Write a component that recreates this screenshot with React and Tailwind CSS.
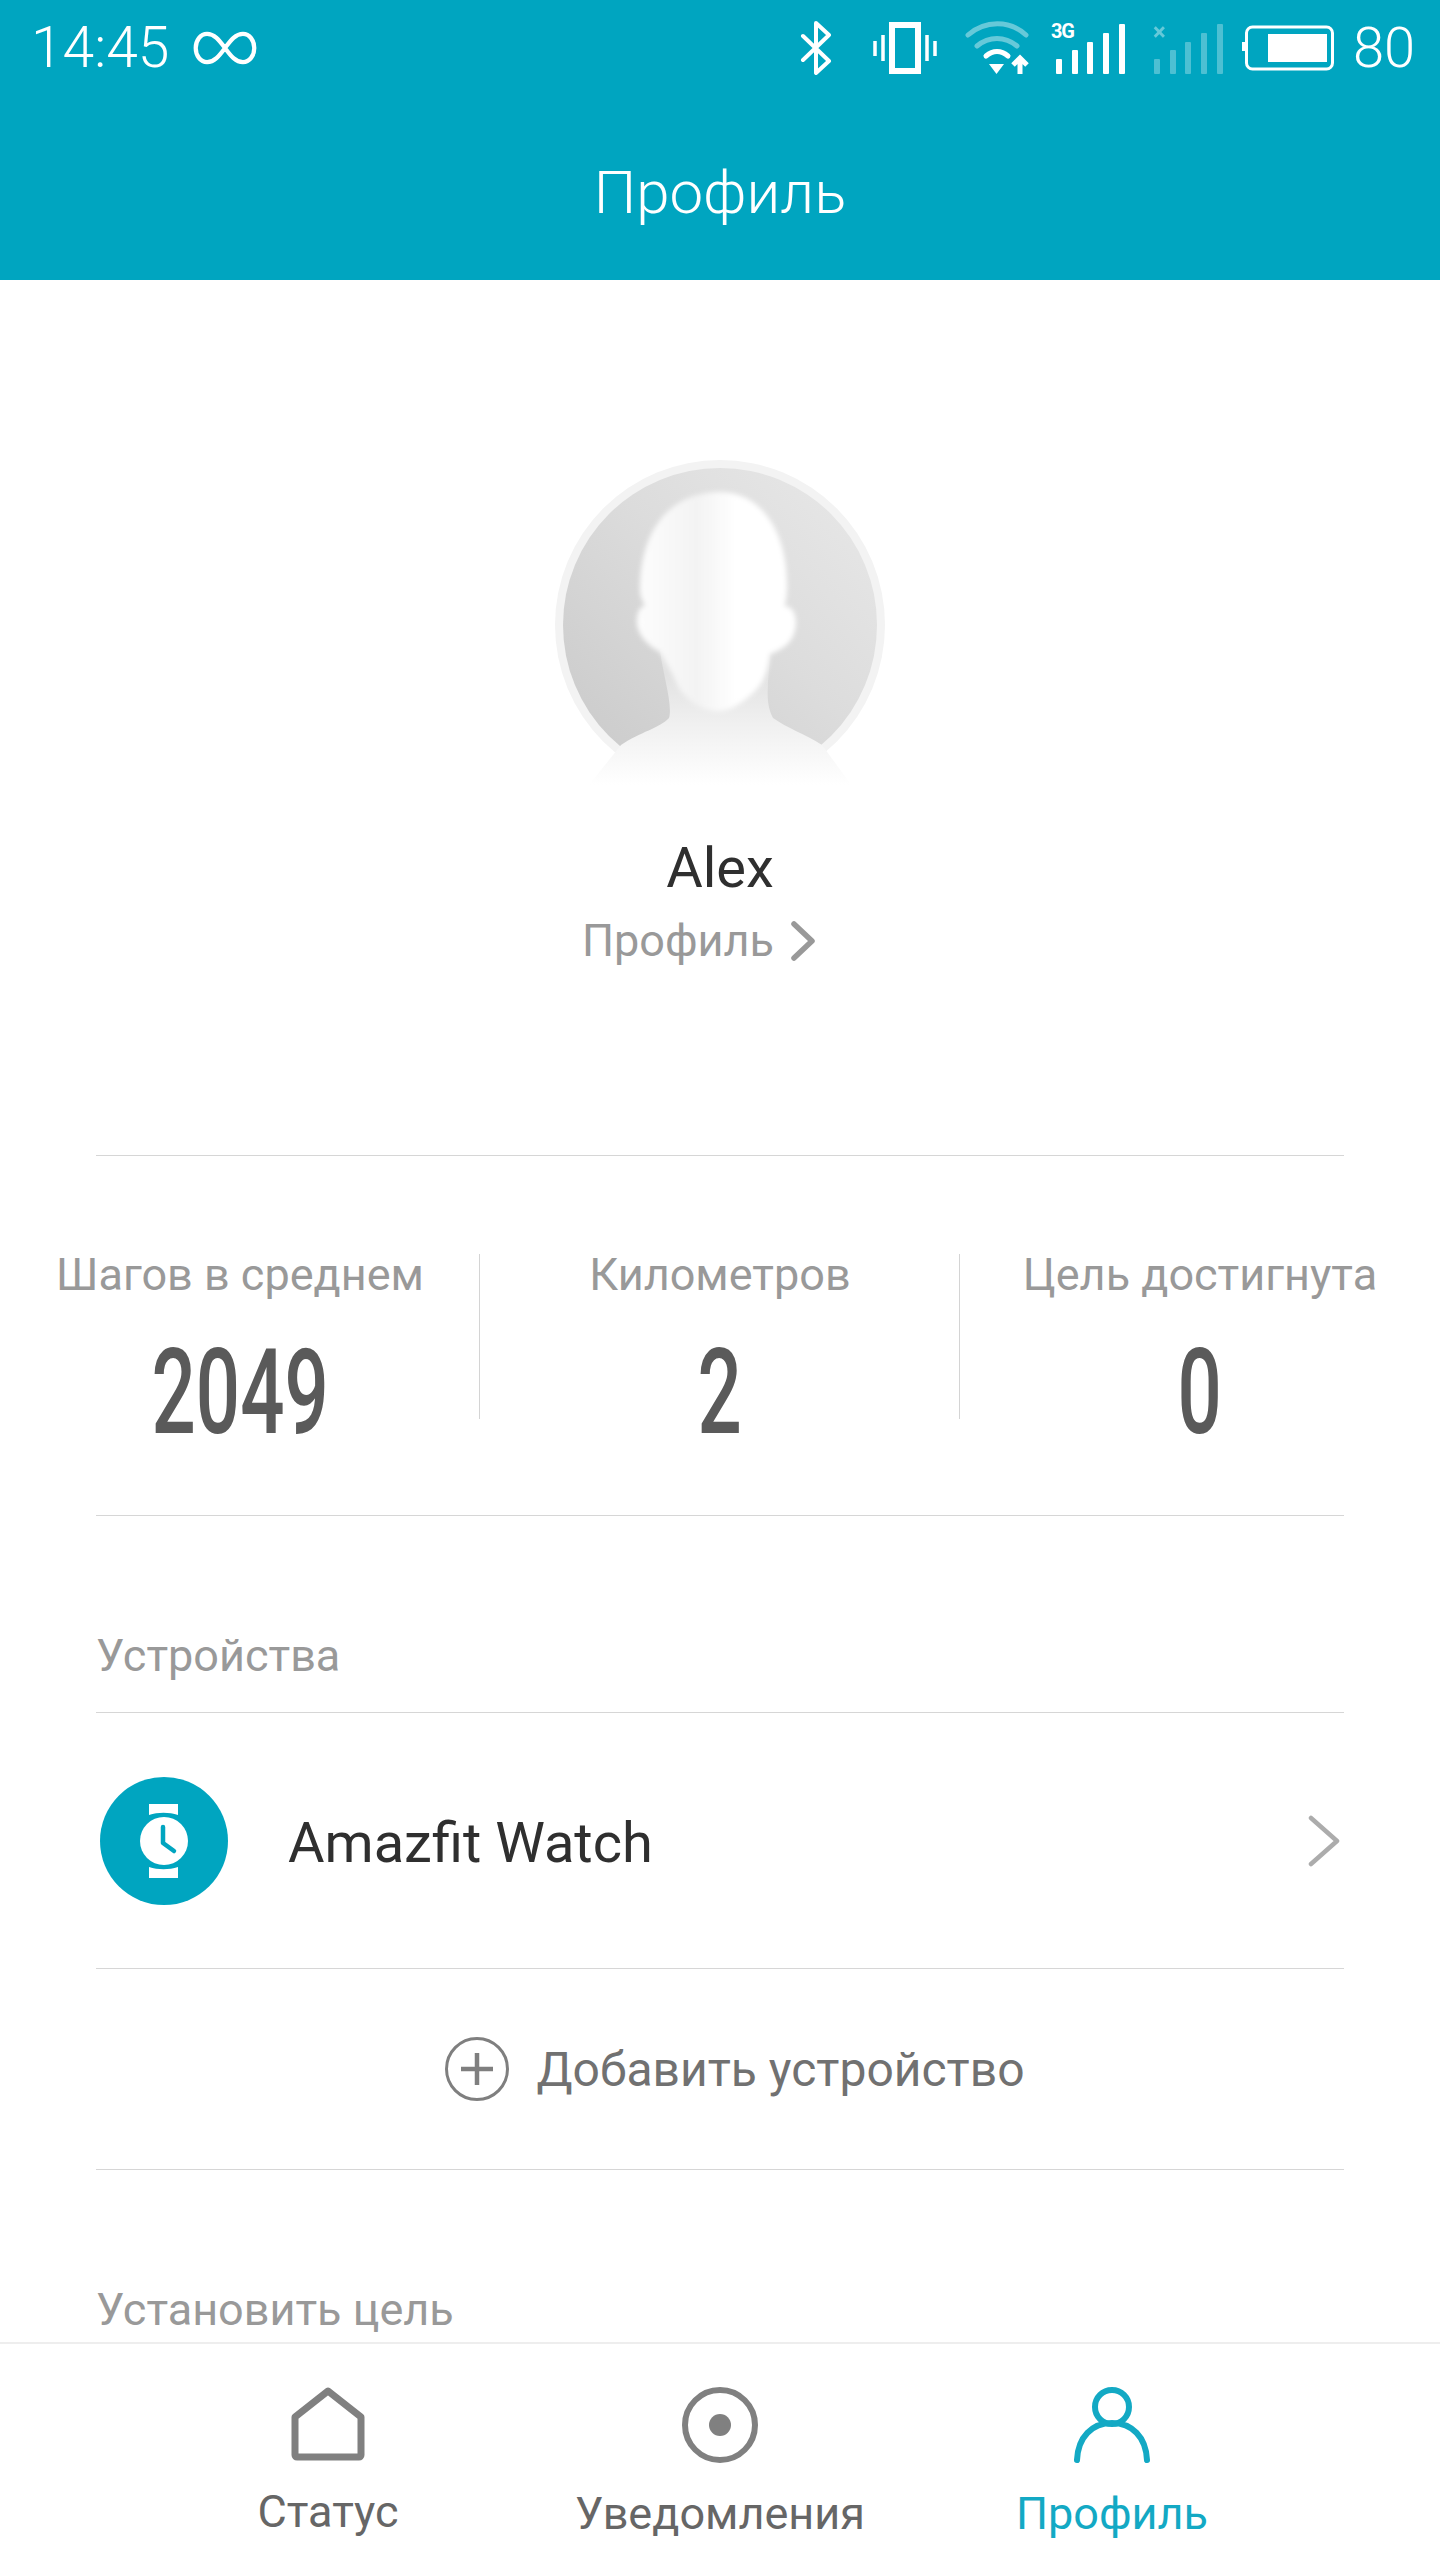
import React from "react";

const Bars = ({ opacity = 1 }) => (
  <svg width="72" height="52" viewBox="0 0 72 52" fill="white" opacity={opacity}>
    <rect x="2" y="36" width="6" height="15" rx="1" />
    <rect x="18" y="27" width="6" height="24" rx="1" />
    <rect x="33" y="19" width="6" height="32" rx="1" />
    <rect x="49" y="10" width="6" height="41" rx="1" />
    <rect x="65" y="1" width="6" height="50" rx="1" />
  </svg>
);

const StatusBar = () => (
  <div className="flex items-center h-[96px] pl-[31px] pr-[25px] text-white">
    <span className="text-[57px] leading-[96px] font-light">14:45</span>
    <svg className="ml-[23px]" width="66" height="34" viewBox="0 0 68 36" fill="none" stroke="white" strokeWidth="4.500">
      <path d="M34 18c-6-8-11-15-19-15C8 3 3 10 3 18s5 15 12 15c8 0 13-7 19-15s11-15 19-15c7 0 12 7 12 15s-5 15-12 15c-8 0-13-7-19-15z" />
    </svg>
    <svg className="ml-auto" width="32" height="54" viewBox="0 0 32 54" fill="none" stroke="white" strokeWidth="4" strokeLinecap="round" strokeLinejoin="round">
      <path d="M3 15l26 25-13 12V2l13 12L3 39" />
    </svg>
    <svg className="ml-[41px]" width="64" height="52" viewBox="0 0 64 52" fill="none" stroke="white">
      <rect x="19" y="3" width="26" height="46" strokeWidth="6" />
      <path d="M2 19v15M10 13v26M54 13v26M62 19v15" strokeWidth="3.500" />
    </svg>
    <svg className="ml-[28px]" width="66" height="54" viewBox="0 0 66 54" fill="none" stroke="white" strokeWidth="5" strokeLinecap="round">
      <path d="M3 14C20-1 45-1 61 14" opacity="0.4" />
      <path d="M12 25c12-10 28-10 40 0" opacity="0.4" />
      <path d="M21 35c7-6 15-6 22 0" />
      <path d="M24 43h15l-7.500 10z" fill="white" stroke="none" />
      <path d="M55 53V38M48 44l7-7 7 7" strokeLinecap="butt" />
    </svg>
    <div className="relative ml-[23px] w-[72px] h-[52px] mt-[2px]">
      <span className="absolute left-[-3px] top-[-2px] text-[20px] leading-[20px] font-bold tracking-[-1px]">3G</span>
      <Bars />
    </div>
    <div className="relative ml-[26px] w-[72px] h-[52px] mt-[2px]">
      <span className="absolute left-[1px] top-[-1px] text-[24px] leading-[20px] font-bold opacity-40">×</span>
      <Bars opacity={0.3} />
    </div>
    <svg className="ml-[18px]" width="92" height="46" viewBox="0 0 92 46" fill="white">
      <rect x="4.500" y="2" width="86" height="42" rx="6" fill="none" stroke="white" strokeWidth="3" />
      <rect x="0" y="17" width="3" height="9" />
      <rect x="26" y="9" width="59" height="28" />
    </svg>
    <span className="ml-[19px] text-[56px] leading-[96px] font-light">80</span>
  </div>
);

const Avatar = () => (
  <svg width="330" height="330" viewBox="0 0 330 330">
    <defs>
      <linearGradient id="bg" x1="0" y1="1" x2="1" y2="0">
        <stop offset="0" stopColor="#c8c8c8" />
        <stop offset="0.55" stopColor="#dcdcdc" />
        <stop offset="1" stopColor="#e9e9e9" />
      </linearGradient>
      <linearGradient id="neck" gradientUnits="userSpaceOnUse" x1="0" y1="215" x2="0" y2="325">
        <stop offset="0" stopColor="#e2e2e2" />
        <stop offset="0.45" stopColor="#f0f0f0" />
        <stop offset="1" stopColor="#ffffff" />
      </linearGradient>
      <linearGradient id="face" x1="0" y1="0" x2="1" y2="0">
        <stop offset="0" stopColor="#fdfdfd" />
        <stop offset="0.38" stopColor="#f3f3f3" />
        <stop offset="0.62" stopColor="#ffffff" />
      </linearGradient>
      <filter id="soft" x="-20%" y="-20%" width="140%" height="140%">
        <feGaussianBlur stdDeviation="2.500" />
      </filter>
    </defs>
    <circle cx="165" cy="165" r="165" fill="#f3f3f3" />
    <circle cx="165" cy="165" r="157" fill="url(#bg)" />
    {/* shoulders melt into the page and hide the lower ring */}
    <path d="M30 330L66 285C85 272 105 268 114 258C118 245 108 215 105 190H215C215 215 208 240 218 258C232 268 250 274 267 285L300 330z" fill="url(#neck)" />
    <path d="M85 130C85 70 115 32 165 32C205 32 232 70 232 125C232 136 231 142 229 146C238 146 243 156 240 170C237 184 226 190 215 194C212 215 208 226 192 238C180 248 170 252 160 251C145 250 132 240 124 228C118 215 113 205 105 192C92 186 80 172 82 158C83 150 86 146 90 146C87 140 85 136 85 130z" fill="url(#face)" filter="url(#soft)" />
  </svg>
);

const Stat = ({ label, value, divider }) => (
  <div className="relative flex flex-col items-center">
    <span className="-mt-[3px] text-[45px] leading-[52px] text-[#999999] whitespace-nowrap">{label}</span>
    <span className="mt-[32px] text-[118px] leading-[120px] font-[480] text-[#5a5a5a] scale-x-[0.66]">{value}</span>
    {divider && <div className="absolute right-0 top-[2px] h-[165px] w-px bg-[#d4d4d4]" />}
  </div>
);

const NavItem = ({ label, active, children }) => (
  <div className="flex flex-col items-center">
    {children}
    <span className={`mt-[23px] text-[45px] leading-[56px] ${active ? "text-[#13a9c4]" : "text-[#666666]"}`}>{label}</span>
  </div>
);

const App = () => {
  return (
    <div className="relative h-[2560px] w-[1440px] overflow-hidden bg-white font-[Roboto,sans-serif]">
      {/* Header */}
      <div className="h-[280px] bg-[#00a5c0]">
        <StatusBar />
        <div className="mt-[57px] text-center text-[60px] leading-[80px] font-light text-white">Профиль</div>
      </div>

      {/* Avatar */}
      <div className="flex flex-col items-center pt-[180px] h-[875px]">
        <Avatar />
        <div className="mt-[48px] text-[56px] leading-[60px] text-[#2f2f2f]">Alex</div>
        <div className="mt-[13px] flex items-center pr-[42px] text-[45px] leading-[60px] text-[#999999]">
          Профиль
          <svg className="ml-[16px]" width="26" height="40" viewBox="0 0 26 40" fill="none" stroke="#999999" strokeWidth="5.500" strokeLinecap="round" strokeLinejoin="round">
            <path d="M4 3l18 17L4 37" />
          </svg>
        </div>
      </div>

      {/* Stats */}
      <div className="mx-[96px] h-px bg-[#d6d6d6]" />
      <div className="grid grid-cols-3 h-[359px] pt-[96px]">
        <Stat label="Шагов в среднем" value="2049" divider />
        <Stat label="Километров" value="2" divider />
        <Stat label="Цель достигнута" value="0" />
      </div>
      <div className="mx-[96px] h-px bg-[#d6d6d6]" />

      {/* Devices */}
      <div className="px-[96px] pt-[114px] text-[45px] leading-[52px] text-[#999999] h-[196px]">Устройства</div>
      <div className="mx-[96px] h-px bg-[#d6d6d6]" />
      <div className="flex items-center h-[255px] pl-[100px] pr-[100px]">
        <svg width="128" height="128" viewBox="0 0 128 128">
          <circle cx="64" cy="64" r="64" fill="#00a5c0" />
          <path d="M49 27h29v11c-9-3-20-3-29 0zM49 90c9 3 20 3 29 0v11H49z" fill="white" />
          <circle cx="64" cy="64" r="24" fill="white" />
          <path d="M63 50v16l11 8" fill="none" stroke="#00a5c0" strokeWidth="4.500" strokeLinecap="round" strokeLinejoin="round" />
        </svg>
        <span className="ml-[60px] mt-[4px] text-[56px] leading-[64px] text-[#2f2f2f]">Amazfit Watch</span>
        <svg className="ml-auto" width="32" height="52" viewBox="0 0 32 52" fill="none" stroke="#acacac" strokeWidth="4.500" strokeLinecap="round" strokeLinejoin="round">
          <path d="M3 3l26 23L3 49" />
        </svg>
      </div>
      <div className="mx-[96px] h-px bg-[#d6d6d6]" />
      <div className="flex items-center justify-center h-[200px] pl-[30px]">
        <svg width="64" height="64" viewBox="0 0 64 64" fill="none" stroke="#7f7f7f">
          <circle cx="32" cy="32" r="30.500" strokeWidth="3" />
          <path d="M32 16v32M16 32h32" strokeWidth="4.500" />
        </svg>
        <span className="ml-[27px] mt-[2px] text-[48px] leading-[60px] text-[#717171]">Добавить устройство</span>
      </div>
      <div className="mx-[96px] h-px bg-[#d6d6d6]" />

      {/* Goal */}
      <div className="px-[96px] pt-[114px] text-[45px] leading-[52px] text-[#999999]">Установить цель</div>

      {/* Bottom tabs */}
      <div className="absolute bottom-0 left-0 right-0 h-[218px] bg-white border-t-2 border-[#eeeeee] px-[132px] pt-[43px]">
        <div className="grid grid-cols-3">
          <NavItem label="Статус">
            <svg width="74" height="74" viewBox="0 0 74 74" fill="none" stroke="#808080" strokeWidth="7" strokeLinejoin="round">
              <path d="M37 4L70 30v38a2 2 0 0 1-2 2H6a2 2 0 0 1-2-2V30z" />
            </svg>
          </NavItem>
          <NavItem label="Уведомления">
            <svg width="76" height="76" viewBox="0 0 76 76">
              <circle cx="38" cy="38" r="35" fill="none" stroke="#808080" strokeWidth="6" />
              <circle cx="38" cy="38" r="11" fill="#808080" />
            </svg>
          </NavItem>
          <NavItem label="Профиль" active>
            <svg width="76" height="76" viewBox="0 0 76 76" fill="none" stroke="#13a9c4" strokeWidth="6" strokeLinecap="round">
              <circle cx="38" cy="20" r="17" />
              <path d="M3 73C4 50 18 36 38 36s34 14 35 37" />
            </svg>
          </NavItem>
        </div>
      </div>
    </div>
  );
};

export default App;
